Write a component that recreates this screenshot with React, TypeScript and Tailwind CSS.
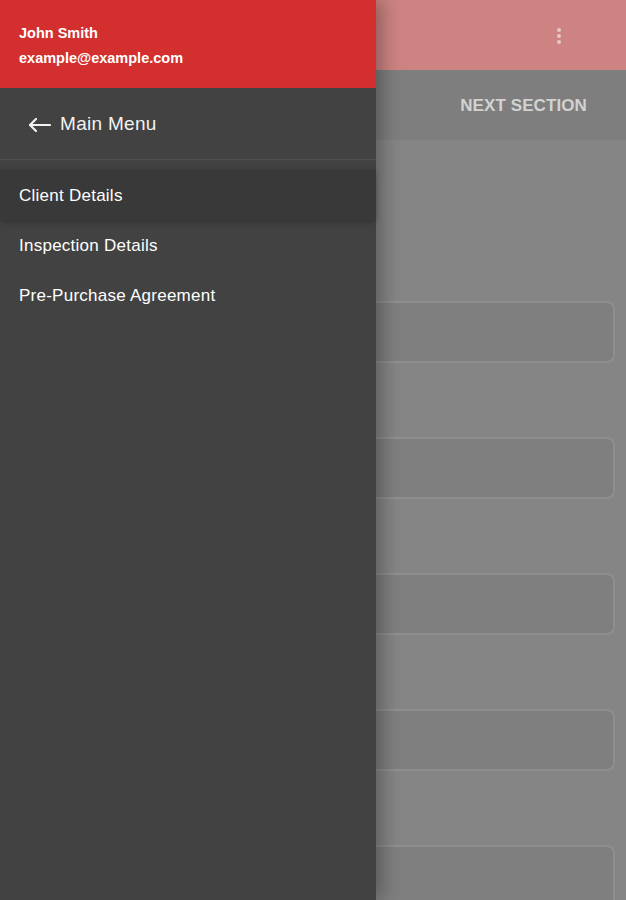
import React from 'react';

const items = ['Client Details', 'Inspection Details', 'Pre-Purchase Agreement'];
const fields = [0, 1, 2, 3, 4];

export default function App() {
  return (
    <div className="relative w-[626px] h-[900px] overflow-hidden font-['Liberation_Sans',Arial,sans-serif]">
      <div className="flex flex-col h-full bg-[#858585]">
        <div className="h-[70px] shrink-0 bg-[#cc8381] flex items-start justify-end pr-[65px] pt-[28px]">
          <div className="flex flex-col gap-[2px]">
            <span className="w-[4px] h-[4px] rounded-full bg-[#e6c9c8]" />
            <span className="w-[4px] h-[4px] rounded-full bg-[#e6c9c8]" />
            <span className="w-[4px] h-[4px] rounded-full bg-[#e6c9c8]" />
          </div>
        </div>
        <div className="h-[70px] shrink-0 bg-[#7e7e7e] flex items-center justify-end pr-[39px] pt-[2px]">
          <span className="text-[17px] font-bold text-[#d2d2d2] tracking-[0.1px]">NEXT SECTION</span>
        </div>
        <div className="flex flex-col gap-[74px] px-[11px] pt-[161px]">
          {fields.map((f) => (
            <div key={f} className="h-[62px] shrink-0 rounded-[8px] border-2 border-[#8e8e8e] bg-[#7f7f7f]" />
          ))}
        </div>
      </div>

      {/* Drawer */}
      <div className="absolute left-0 top-0 w-[376px] h-full bg-[#424242] shadow-[6px_0_18px_rgba(0,0,0,0.3)] flex flex-col">
        <div className="h-[88px] shrink-0 bg-[#d32f2f] px-[19px] pt-[21px] text-white">
          <div className="text-[14.5px] font-bold leading-[25px]">John Smith</div>
          <div className="text-[14.5px] font-bold leading-[25px]">example@example.com</div>
        </div>
        <div className="h-[72px] shrink-0 border-b border-[#4f4f4f] flex items-center pl-[28px] pt-[2px] gap-[9px] text-[#f2f2f2]">
          <svg width="23" height="16" viewBox="0 0 23 16" fill="none" stroke="currentColor" strokeWidth="2.2" strokeLinecap="round" strokeLinejoin="round">
            <path d="M22 8H2" />
            <path d="M8 2L2 8l6 6" />
          </svg>
          <span className="text-[19px] tracking-[0.3px]">Main Menu</span>
        </div>
        <div className="flex flex-col pt-[10px]">
          {items.map((label, i) => (
            <div
              key={label}
              className={
                i === 0
                  ? 'h-[50px] flex items-center px-[19px] pt-[2px] bg-[#393939] shadow-[0_2px_6px_rgba(0,0,0,0.25)]'
                  : 'h-[50px] flex items-center px-[19px] pt-[2px]'
              }
            >
              <span className="text-[17px] tracking-[0.25px] text-white">{label}</span>
            </div>
          ))}
        </div>
      </div>
    </div>
  );
}
